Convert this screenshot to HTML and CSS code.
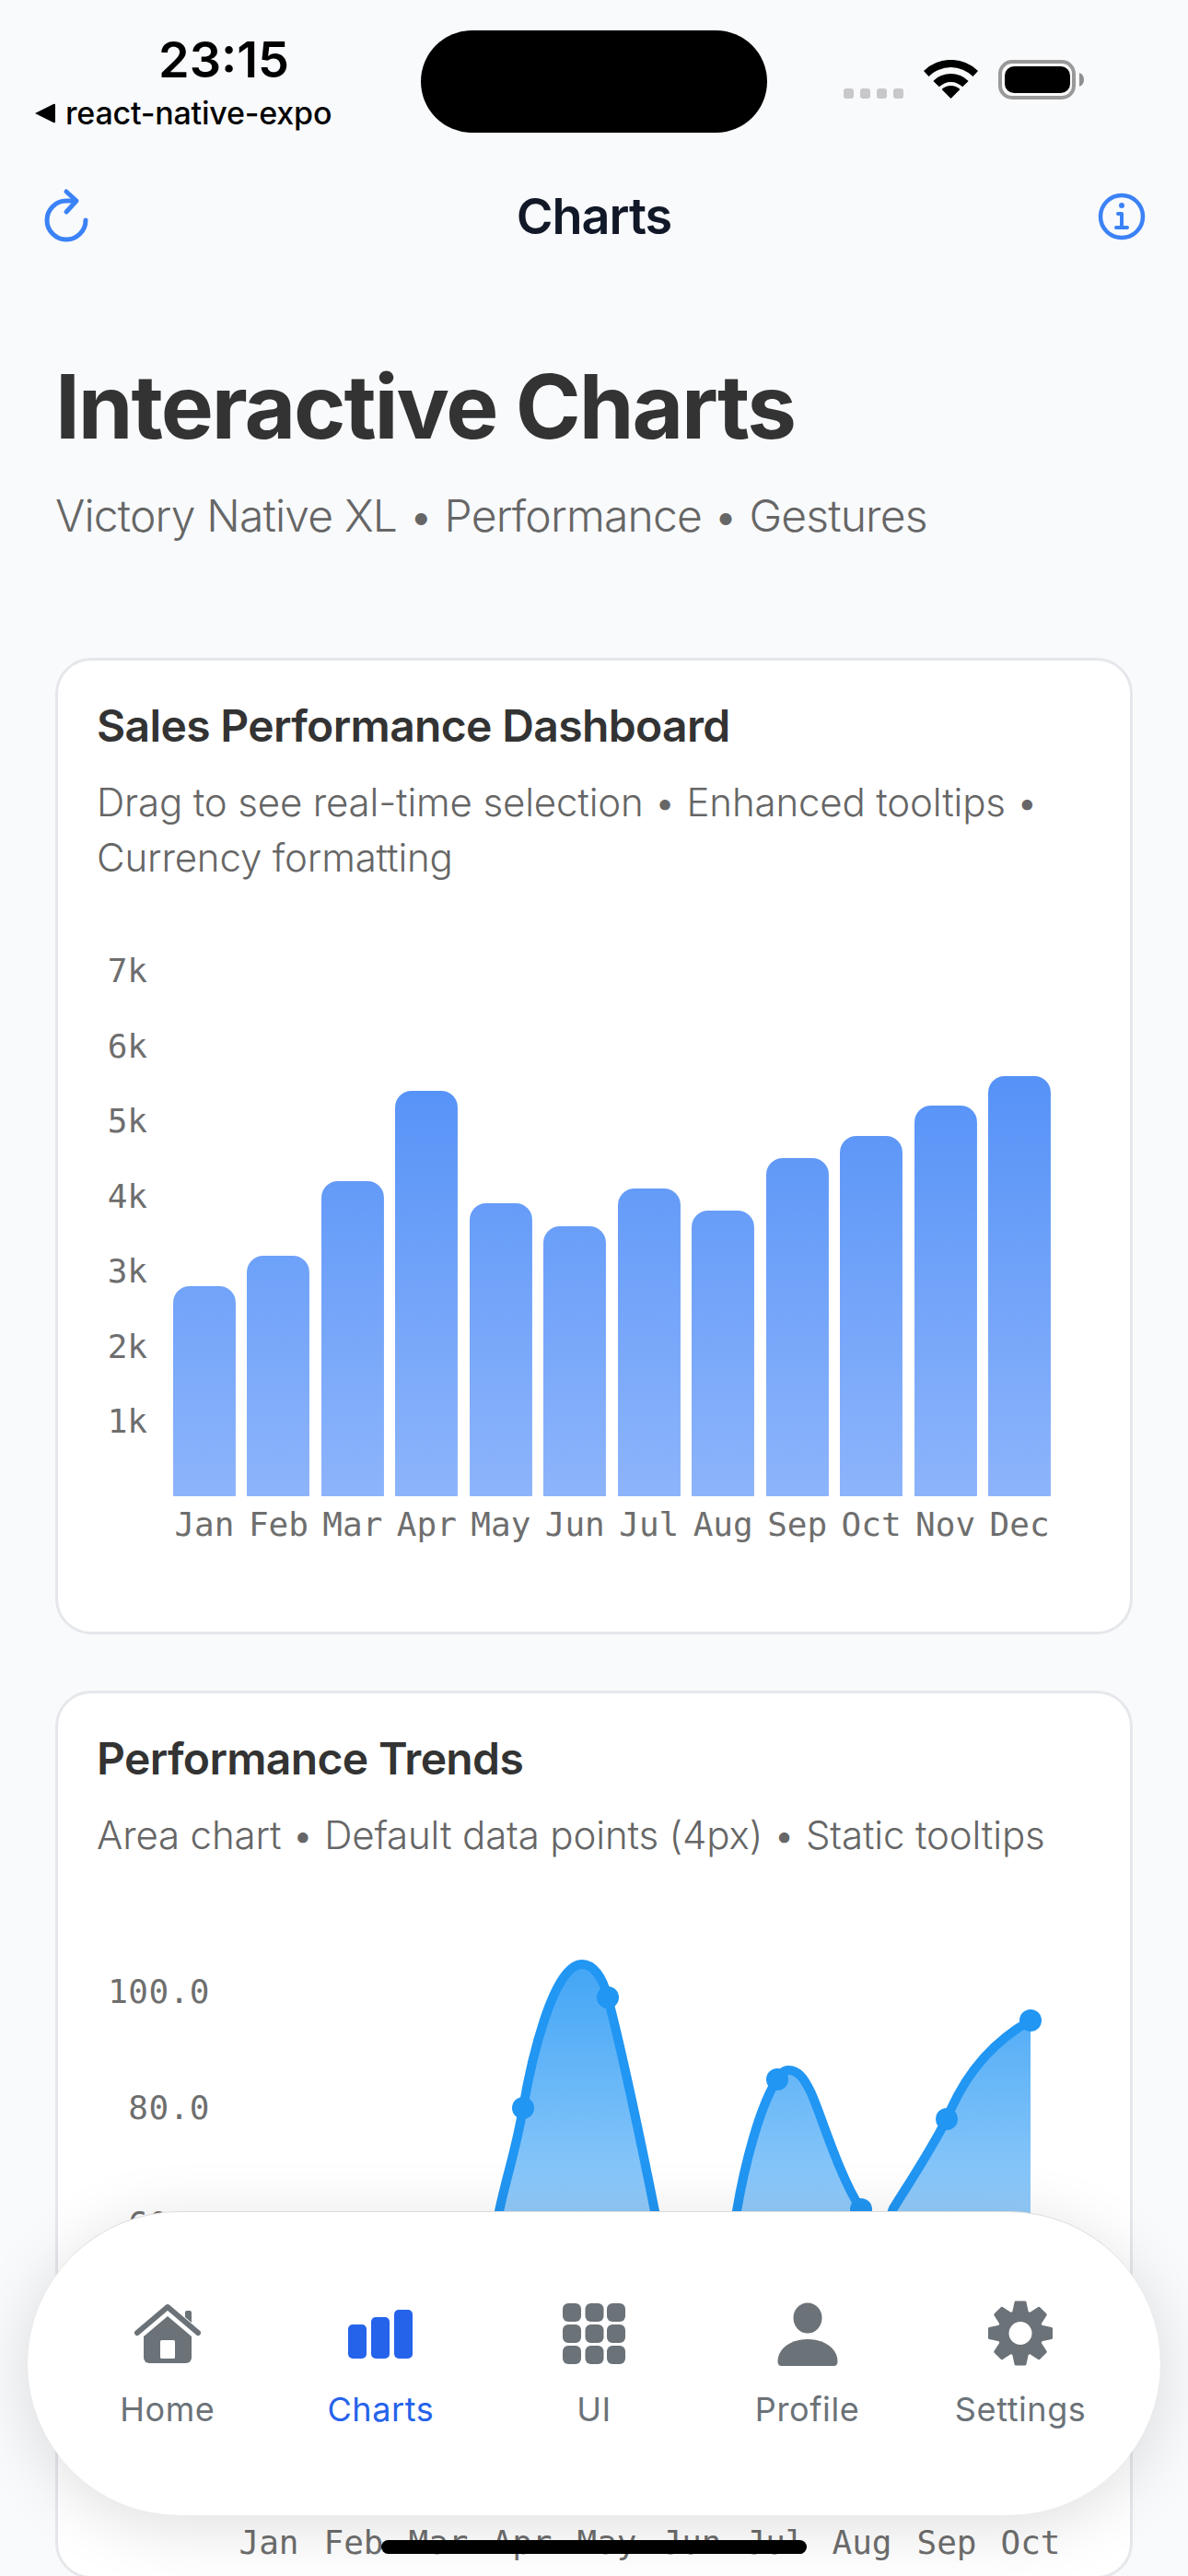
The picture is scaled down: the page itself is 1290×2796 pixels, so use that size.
FILE: index.html
```html
<!DOCTYPE html>
<html lang="en">
<head>
    <meta charset="UTF-8">
    <meta name="viewport" content="width=device-width, initial-scale=1.0">
    <title>Charts</title>
    <link rel="stylesheet" href="styles.css">
</head>
<body>
<div class="app">
    <div class="status-bar">
        <div class="status-left">
            <div class="clock">23:15</div>
            <div class="back-app">
                <svg class="back-arrow" width="22" height="22" viewBox="0 0 22 22"><path d="M0 11 20 1q2-1 2 1v18q0 2-2 1z"/></svg>
                <span>react-native-expo</span>
            </div>
        </div>
        <div class="island"></div>
        <div class="status-right">
            <div class="signal"><i></i><i></i><i></i><i></i></div>
            <svg class="wifi" width="61" height="42" viewBox="-2 0 61 42">
                <path d="M-1 12A42 42 0 0 1 58 12L52.500 18A34 34 0 0 0 4.500 18z"/>
                <path d="M9.400 22.900A27 27 0 0 1 47.600 22.900L41.200 29.300A18 18 0 0 0 15.800 29.300z"/>
                <path d="M18.600 32.100A14 14 0 0 1 38.400 32.100L28.500 42z"/>
            </svg>
            <svg class="battery" width="93" height="43" viewBox="0 0 93 43">
                <rect x="2" y="2" width="80" height="39" rx="13" fill="none" stroke="#999" stroke-width="4"/>
                <rect x="7" y="7" width="71" height="29" rx="10"/>
                <path d="M88 14q5 2 5 7.500t-5 7.500z" fill="#8e8e8e"/>
            </svg>
        </div>
    </div>

    <header class="nav">
        <svg class="nav-icon" width="52" height="62" viewBox="0 0 52 62" fill="none" stroke="#3b82f6" stroke-width="5" stroke-linecap="round" stroke-linejoin="round">
            <path d="M47 35A21 21 0 1 1 26 14H36"/>
            <path d="M26 4 37 14 26 26"/>
        </svg>
        <div class="nav-title">Charts</div>
        <svg class="nav-icon" width="52" height="54" viewBox="0 0 52 54" fill="none" stroke="#3b82f6" stroke-width="4.500" stroke-linecap="round" stroke-linejoin="round">
            <circle cx="26" cy="27" r="23"/>
            <path d="M22 24h4v15M20 39h12" stroke-width="4"/>
            <circle cx="26" cy="15" r="3" fill="#3b82f6" stroke="none"/>
        </svg>
    </header>

    <main class="content">
        <h1 class="page-title">Interactive Charts</h1>
        <p class="page-sub">Victory Native XL • Performance • Gestures</p>

        <section class="card card-sales">
            <div class="card-head">
                <h2 class="card-title">Sales Performance Dashboard</h2>
                <p class="card-desc">Drag to see real-time selection • Enhanced tooltips • Currency formatting</p>
            </div>
            <div class="bar-chart">
                <div class="y-axis">
                    <span>7k</span><span>6k</span><span>5k</span><span>4k</span><span>3k</span><span>2k</span><span>1k</span>
                </div>
                <div class="bars">
                    <div class="bar" style="height:228px"></div>
                    <div class="bar" style="height:261px"></div>
                    <div class="bar" style="height:342px"></div>
                    <div class="bar" style="height:440px"></div>
                    <div class="bar" style="height:318px"></div>
                    <div class="bar" style="height:293px"></div>
                    <div class="bar" style="height:334px"></div>
                    <div class="bar" style="height:310px"></div>
                    <div class="bar" style="height:367px"></div>
                    <div class="bar" style="height:391px"></div>
                    <div class="bar" style="height:424px"></div>
                    <div class="bar" style="height:456px"></div>
                </div>
                <div class="x-axis">
                    <span>Jan</span><span>Feb</span><span>Mar</span><span>Apr</span><span>May</span><span>Jun</span>
                    <span>Jul</span><span>Aug</span><span>Sep</span><span>Oct</span><span>Nov</span><span>Dec</span>
                </div>
            </div>
        </section>

        <section class="card">
            <div class="card-head">
                <h2 class="card-title">Performance Trends</h2>
                <p class="card-desc">Area chart • Default data points (4px) • Static tooltips</p>
            </div>
            <!-- viewBox uses page coordinates, easier to line up against the screenshot -->
            <svg class="area-chart" width="1164" height="723" viewBox="63 2073 1164 723">
                <defs>
                    <linearGradient id="areaFill" gradientUnits="userSpaceOnUse" x1="0" y1="2130" x2="0" y2="2400">
                        <stop offset="0" stop-color="#42a5f5"/>
                        <stop offset="1" stop-color="#92cbfa"/>
                    </linearGradient>
                </defs>
                <g class="axis-text axis-values" text-anchor="end">
                    <text x="228" y="2174">100.0</text>
                    <text x="228" y="2300">80.0</text>
                    <text x="228" y="2426">60.0</text>
                    <text x="228" y="2552">40.0</text>
                    <text x="228" y="2678">20.0</text>
                </g>
                <path fill="url(#areaFill)" d="M476 2725V2650C500 2560 525 2480 542 2400C551 2358 560 2335 568 2288C576 2241 600 2132 632 2132C644 2132 654 2145 660 2168C673 2218 695 2320 711 2400C724 2465 735 2620 755 2620C775 2620 785 2490 800 2400C808 2352 825 2285 844 2257C848 2251 851 2247 856 2247C868 2247 874 2258 880 2270C890 2290 910 2360 935 2398C942 2412 945 2425 952 2425C960 2425 965 2410 970 2397C990 2365 1010 2335 1028 2300C1050 2245 1085 2212 1119 2193V2725z"/>
                <path fill="none" stroke="#2196f3" stroke-width="10" stroke-linejoin="round" d="M476 2650C500 2560 525 2480 542 2400C551 2358 560 2335 568 2288C576 2241 600 2132 632 2132C644 2132 654 2145 660 2168C673 2218 695 2320 711 2400C724 2465 735 2620 755 2620C775 2620 785 2490 800 2400C808 2352 825 2285 844 2257C848 2251 851 2247 856 2247C868 2247 874 2258 880 2270C890 2290 910 2360 935 2398C942 2412 945 2425 952 2425C960 2425 965 2410 970 2397C990 2365 1010 2335 1028 2300C1050 2245 1085 2212 1119 2193"/>
                <g fill="#2196f3">
                    <circle cx="568" cy="2288" r="12"/>
                    <circle cx="660" cy="2168" r="12"/>
                    <circle cx="844" cy="2257" r="12"/>
                    <circle cx="935" cy="2398" r="12"/>
                    <circle cx="1028" cy="2300" r="12"/>
                    <circle cx="1119" cy="2193" r="12"/>
                </g>
                <g class="axis-text" text-anchor="middle">
                    <text x="292" y="2772">Jan</text>
                    <text x="384" y="2772">Feb</text>
                    <text x="476" y="2772">Mar</text>
                    <text x="567" y="2772">Apr</text>
                    <text x="659" y="2772">May</text>
                    <text x="751" y="2772">Jun</text>
                    <text x="842" y="2772">Jul</text>
                    <text x="936" y="2772">Aug</text>
                    <text x="1028" y="2772">Sep</text>
                    <text x="1119" y="2772">Oct</text>
                </g>
            </svg>
        </section>
    </main>

    <nav class="tab-bar">
        <div class="tab">
            <svg width="72" height="72" viewBox="0 0 72 72" fill="#6b7278">
                <path d="M36 17 62 39V62a6 6 0 0 1-6 6H16a6 6 0 0 1-6-6V39z"/>
                <path d="M3 35 36 7 69 35" fill="none" stroke="#6b7278" stroke-width="6" stroke-linecap="round" stroke-linejoin="round"/>
                <path d="M55 15v-2a2 2 0 0 1 2-2h3a2 2 0 0 1 2 2v11l-7-6z"/>
                <rect x="28" y="43" width="16" height="20" rx="1.500" fill="#fff"/>
            </svg>
            <span>Home</span>
        </div>
        <div class="tab tab-active">
            <svg width="72" height="72" viewBox="0 0 72 72" fill="#2563eb">
                <rect x="1" y="26" width="20" height="37" rx="5"/>
                <rect x="26" y="18" width="20" height="45" rx="5"/>
                <rect x="51" y="10" width="20" height="53" rx="5"/>
            </svg>
            <span>Charts</span>
        </div>
        <div class="tab">
            <svg width="72" height="72" viewBox="0 0 72 72" fill="#6b7278">
                <rect x="2" y="3" width="20" height="20" rx="6"/>
                <rect x="26.500" y="3" width="20" height="20" rx="6"/>
                <rect x="50" y="3" width="20" height="20" rx="6"/>
                <rect x="2" y="26" width="20" height="20" rx="6"/>
                <rect x="26.500" y="26" width="20" height="20" rx="6"/>
                <rect x="50" y="26" width="20" height="20" rx="6"/>
                <rect x="2" y="49" width="20" height="20" rx="6"/>
                <rect x="26.500" y="49" width="20" height="20" rx="6"/>
                <rect x="50" y="49" width="20" height="20" rx="6"/>
            </svg>
            <span>UI</span>
        </div>
        <div class="tab">
            <svg width="72" height="72" viewBox="0 0 72 72" fill="#6b7278">
                <ellipse cx="36" cy="19" rx="15.500" ry="16.500"/>
                <path d="M3.500 66C3.500 52 18 42 36 42S68.500 52 68.500 66q0 5-4 5H7.500q-4 0-4-5z"/>
            </svg>
            <span>Profile</span>
        </div>
        <div class="tab">
            <svg width="72" height="72" viewBox="0 0 72 72" fill="#6b7278">
                <circle cx="36" cy="35.500" r="25"/>
                <g stroke="#6b7278" stroke-width="3" stroke-linejoin="round">
                    <path d="M31 2h10l3 14H28z"/>
                    <path d="M31 2h10l3 14H28z" transform="rotate(45 36 35.500)"/>
                    <path d="M31 2h10l3 14H28z" transform="rotate(90 36 35.500)"/>
                    <path d="M31 2h10l3 14H28z" transform="rotate(135 36 35.500)"/>
                    <path d="M31 2h10l3 14H28z" transform="rotate(180 36 35.500)"/>
                    <path d="M31 2h10l3 14H28z" transform="rotate(225 36 35.500)"/>
                    <path d="M31 2h10l3 14H28z" transform="rotate(270 36 35.500)"/>
                    <path d="M31 2h10l3 14H28z" transform="rotate(315 36 35.500)"/>
                </g>
                <circle cx="36" cy="35.500" r="12.500" fill="#fff"/>
            </svg>
            <span>Settings</span>
        </div>
    </nav>

    <div class="home-indicator"></div>
</div>
</body>
</html>
```

FILE: styles.css
```css
* {
    box-sizing: border-box;
}
body {
    margin: 0;
    font-family: Inter, "Liberation Sans", sans-serif;
    background-color: #f9fafc;
}
.app {
    position: relative;
    width: 1290px;
    height: 2796px;
    overflow: hidden;
    background-color: #f9fafc;
}

/* status bar */
.status-bar {
    display: flex;
    height: 170px;
    color: #000;
}
.status-left {
    width: 457px;
    padding: 37px 0 0 38px;
}
.clock {
    margin-left: 134px;
    font-size: 54px;
    line-height: 56px;
    font-weight: 600;
}
.back-app {
    display: flex;
    align-items: center;
    gap: 11px;
    margin-top: 8px;
    font-size: 34px;
    line-height: 44px;
    font-weight: 500;
    letter-spacing: -0.2px;
}
.back-arrow {
    flex: none;
}
.island {
    width: 376px;
    height: 111px;
    margin-top: 33px;
    border-radius: 56px;
    background: #000;
}
.status-right {
    display: flex;
    align-items: flex-end;
    height: 108px;
    margin-left: 83px;
}
.signal {
    display: flex;
    gap: 7px;
    margin: 0 21px 1px 0;
}
.signal i {
    width: 11px;
    height: 11px;
    border-radius: 3px;
    background: #c8c8ca;
}
.wifi {
    margin-right: 21px;
    margin-bottom: 1px;
}

/* nav */
.nav {
    display: flex;
    align-items: center;
    justify-content: space-between;
    height: 130px;
    padding: 0 46px;
}
.nav-title {
    font-size: 54px;
    line-height: 64px;
    font-weight: 600;
    color: #111827;
    letter-spacing: -1px;
}

/* page */
.content {
    padding: 83px 60px 0;
}
.page-title {
    margin: 0 0 28px;
    font-size: 96px;
    line-height: 116px;
    font-weight: 700;
    color: #333;
    letter-spacing: -2.1px;
}
.page-sub {
    margin: 0 0 121px;
    font-size: 48px;
    line-height: 66px;
    font-weight: 350;
    color: #666;
    letter-spacing: -0.83px;
}
.card {
    margin-bottom: 61px;
    border: 3px solid #e5e7eb;
    border-radius: 39px;
    background: #fff;
}
.card-sales {
    height: 1060px;
}
.card-head {
    padding: 35px 42px 0;
}
.card-title {
    margin: 0 0 17px;
    font-size: 48px;
    line-height: 72px;
    font-weight: 600;
    color: #333;
    letter-spacing: -0.65px;
}
.card-desc {
    margin: 0;
    font-size: 42px;
    line-height: 60px;
    font-weight: 350;
    color: #666;
    letter-spacing: -0.15px;
}

/* bar chart */
.bar-chart {
    display: grid;
    grid-template-columns: 55px 953px;
    column-gap: 28px;
    margin: 52px 0 0 42px;
    font-family: "DejaVu Sans Mono", monospace;
    font-size: 36px;
    color: #6e6e6e;
}
.y-axis {
    height: 611px;
    text-align: right;
}
.y-axis span {
    display: block;
    height: 81.5px;
    line-height: 81.5px;
}
.bars {
    display: flex;
    align-items: flex-end;
    gap: 12.6px;
    height: 611px;
}
.bar {
    flex: 1;
    border-radius: 18px 18px 0 0;
    background: linear-gradient(#5592f7, #8db4fb) bottom / 100% 460px no-repeat;
}
.x-axis {
    grid-column: 2;
    display: grid;
    grid-template-columns: repeat(12, 1fr);
    column-gap: 12.6px;
    margin-top: 11px;
    line-height: 40px;
    text-align: center;
}

/* area chart */
.area-chart {
    display: block;
    margin-top: 51px;
}
.axis-text {
    font-family: "DejaVu Sans Mono", monospace;
    font-size: 36px;
    fill: #6e6e6e;
}
.axis-values {
    letter-spacing: 0.5px;
}

/* floating tab bar */
.tab-bar {
    position: absolute;
    left: 30px;
    top: 2400px;
    display: flex;
    width: 1230px;
    height: 330px;
    padding: 96px 36px 0;
    border-top: 1.5px solid #dcdcdc;
    border-radius: 165px;
    background: #fff;
    box-shadow: 0 12px 70px rgba(0, 0, 0, 0.13);
}
.tab {
    display: flex;
    flex-direction: column;
    align-items: center;
    flex: 1;
    font-size: 36px;
    line-height: 44px;
    font-weight: 400;
    letter-spacing: 0.6px;
    color: #6b7278;
}
.tab svg {
    margin-bottom: 24px;
}
.tab-active {
    color: #2563eb;
}
.home-indicator {
    position: absolute;
    left: 414px;
    top: 2757px;
    width: 462px;
    height: 15px;
    border-radius: 8px;
    background: #000;
}
```
